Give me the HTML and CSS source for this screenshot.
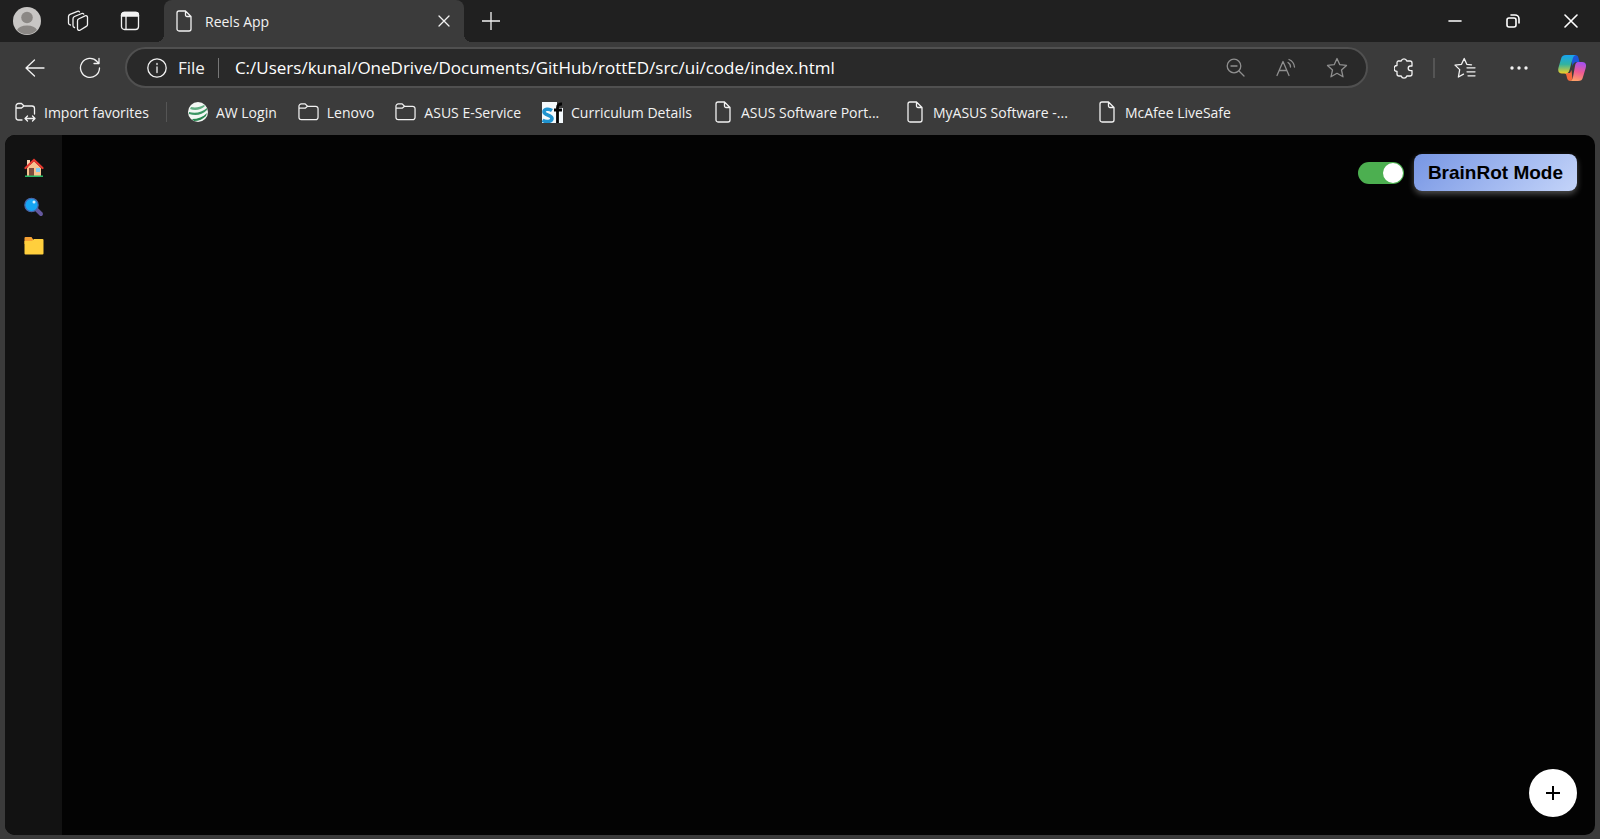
FILE: index.html
```html
<!DOCTYPE html>
<html lang="en">

<head>
    <meta charset="UTF-8">
    <title>Reels App</title>
    <link rel="stylesheet" href="styles.css">
</head>

<body>
    <svg class="symbols" aria-hidden="true">
        <symbol id="page" viewBox="0 0 16 22">
            <path d="M3 1h6.500L15 6.500V19a2 2 0 0 1-2 2H3a2 2 0 0 1-2-2V3a2 2 0 0 1 2-2zM9.500 1v4a1.500 1.500 0 0 0 1.500 1.500h4" />
        </symbol>
        <symbol id="folder" viewBox="0 0 22 20">
            <path d="M1 4a2.500 2.500 0 0 1 2.500-2.500h4L10 4h8.500A2.500 2.500 0 0 1 21 6.500v9a2.500 2.500 0 0 1-2.500 2.500h-15A2.500 2.500 0 0 1 1 15.500zM1 6h6.500L10 4" />
        </symbol>
    </svg>

    <div class="tabs">
        <button class="avatar" aria-label="Profile">
            <svg width="28" height="28" viewBox="0 0 28 28">
                <circle cx="14" cy="14" r="14" fill="#c8c6c4" />
                <circle cx="14" cy="10.500" r="5.800" fill="#8b8885" />
                <path d="M4 23a10.500 6.500 0 0 1 20 0 14 14 0 0 1-20 0z" fill="#8b8885" />
            </svg>
        </button>
        <button class="workspaces" aria-label="Workspaces">
            <svg class="line" width="22" height="22" viewBox="0 0 22 22">
                <path d="M11.500 9l6.500-3.200a1.700 1.700 0 0 1 2.500 1.500v7.200a2 2 0 0 1-1.200 1.900l-6.300 3.800a1.700 1.700 0 0 1-2.500-1.500v-7.700A2.200 2.200 0 0 1 11.500 9z" />
                <path d="M7.500 17.500A2 2 0 0 1 6 15.500V8.700a2.500 2.500 0 0 1 1.500-2.200l7.300-3a1.800 1.800 0 0 1 2 .6" />
                <path d="M3.500 15A2 2 0 0 1 1.500 13V6.500A2.500 2.500 0 0 1 3 4.300l7.500-3a1.800 1.800 0 0 1 2 .6" />
            </svg>
        </button>
        <button class="tab-actions" aria-label="Tab actions">
            <svg class="line" width="20" height="20" viewBox="0 0 20 20">
                <rect x="1.500" y="1.500" width="17" height="17" rx="3" />
                <path d="M1.500 5V4a2.500 2.500 0 0 1 2.500-2.500h12A2.500 2.500 0 0 1 18.500 4v1z" fill="#f2f2f2" />
                <path d="M6 5v13" />
            </svg>
        </button>
        <div class="tab">
            <svg class="line" width="16" height="22"><use href="#page" /></svg>
            <span class="tab-title">Reels App</span>
            <button aria-label="Close tab">
                <svg class="line" width="12" height="12" viewBox="0 0 12 12"><path d="M1 1l10 10M11 1L1 11" /></svg>
            </button>
        </div>
        <button class="new-tab" aria-label="New tab">
            <svg class="line" width="18" height="18" viewBox="0 0 18 18"><path d="M9 0v18M0 9h18" /></svg>
        </button>
        <div class="window-buttons">
            <button aria-label="Minimize">
                <svg class="line bold" width="14" height="14" viewBox="0 0 14 14"><path d="M1 7h12" /></svg>
            </button>
            <button aria-label="Restore">
                <svg class="line bold" width="14" height="14" viewBox="0 0 14 14">
                    <rect x="1" y="4" width="9" height="9" rx="2" />
                    <path d="M5 1h4a4 4 0 0 1 4 4v4" />
                </svg>
            </button>
            <button aria-label="Close window">
                <svg class="line bold" width="14" height="14" viewBox="0 0 14 14"><path d="M1 1l12 12M13 1L1 13" /></svg>
            </button>
        </div>
    </div>

    <div class="toolbar">
        <button class="back" aria-label="Back">
            <svg class="line" width="20" height="18" viewBox="0 0 20 18"><path d="M19 9H1.500M9.500 1l-8.500 8 8.500 8" /></svg>
        </button>
        <button class="reload" aria-label="Refresh">
            <svg class="line" width="22" height="22" viewBox="0 0 22 22">
                <path d="M20.500 11A9.500 9.500 0 1 1 18 4.500l2 2M20 1.500v5h-5" />
            </svg>
        </button>
        <div class="address">
            <svg class="line" width="20" height="20" viewBox="0 0 20 20">
                <circle cx="10" cy="10" r="9.200" />
                <path d="M10 9v5.500M10 5.500v1" />
            </svg>
            <label for="url">File</label>
            <input type="text" id="url" value="C:/Users/kunal/OneDrive/Documents/GitHub/rottED/src/ui/code/index.html">
            <div class="address-buttons">
                <button aria-label="Zoom out">
                    <svg class="line" width="20" height="20" viewBox="0 0 20 20">
                        <circle cx="8" cy="8" r="6.800" />
                        <path d="M13 13l5 5M5 8h6" />
                    </svg>
                </button>
                <button aria-label="Read aloud">
                    <svg class="line" width="20" height="20" viewBox="0 0 20 20">
                        <path d="M1 17.500L7 3.500l6 14M3.200 12.500h7.600M12 4.500a5 5 0 0 1 2.500 4.500M13 1.500a9 9 0 0 1 5.500 7.500" />
                    </svg>
                </button>
                <button aria-label="Add to favorites">
                    <svg class="line" width="22" height="22" viewBox="0 0 22 22">
                        <path d="M11 1.500l2.800 6.200 6.700.7-5 4.600 1.500 6.800-6-3.500-6 3.500 1.500-6.800-5-4.600 6.700-.7z" />
                    </svg>
                </button>
            </div>
        </div>
        <div class="tools">
            <button aria-label="Extensions">
                <svg class="line" width="20" height="22" viewBox="0 0 20 22">
                    <path d="M4 4h3.200a2.900 2.900 0 0 1 5.600 0H16a2 2 0 0 1 2 2v3h-1.500a2.300 2.300 0 0 0 0 4.600H18V17a2 2 0 0 1-2 2h-3.200a2.900 2.900 0 0 1-5.600 0H5a2 2 0 0 1-2-2v-2.700a2.900 2.900 0 0 1 0-5.800V6a2 2 0 0 1 1-2z" />
                </svg>
            </button>
            <span class="divider"></span>
            <button class="favorites" aria-label="Favorites">
                <svg class="line" width="22" height="22" viewBox="0 0 22 22">
                    <path d="M17.500 7.800l-4.700-.5L10.200 1.500 7.500 7.300l-6.500.8 4.700 4.500L4.400 20l5.100-2.900M13 10.800h8M13 14.800h8M14 18.800h7" />
                </svg>
            </button>
            <button class="more" aria-label="Settings and more">
                <svg width="18" height="4" viewBox="0 0 18 4" fill="#f2f2f2">
                    <circle cx="2" cy="2" r="1.700" />
                    <circle cx="9" cy="2" r="1.700" />
                    <circle cx="16" cy="2" r="1.700" />
                </svg>
            </button>
            <button aria-label="Copilot">
                <svg width="28" height="26" viewBox="0 0 28 26">
                    <defs>
                        <linearGradient id="left" x1="0" y1="0" x2="0" y2="1">
                            <stop offset="0" stop-color="#17a3f0" />
                            <stop offset=".5" stop-color="#31b3a0" />
                            <stop offset="1" stop-color="#f0cf25" />
                        </linearGradient>
                        <linearGradient id="right" x1=".5" y1="0" x2=".3" y2="1">
                            <stop offset="0" stop-color="#a650ed" />
                            <stop offset=".5" stop-color="#ef5b91" />
                            <stop offset="1" stop-color="#ffa266" />
                        </linearGradient>
                    </defs>
                    <path d="M13 0h4a3.500 3.500 0 0 1 3.500 3l1 4h-3c-2 0-3 1-4 4z" fill="#1c55d8" />
                    <path d="M6 18h6l1.500-3 1 9-2 2c-2 0-3-1-3.500-3C8.500 20 8 18.500 6 18z" fill="#f4693c" />
                    <path d="M8 0h10c-2 0-3 2-4 6l-2.500 9c-.7 2.500-2 3.500-4 3.500H4c-3 0-4.500-2-3.500-6L3 4c.8-3 2-4 5-4z" fill="url(#left)" />
                    <path d="M20 7h4c3.500 0 4.700 2 3.700 6L25 22c-.8 3-2 4-5 4h-8.500c2 0 3-1.500 3.500-4l2-11c.5-3 1.500-4 3-4z" fill="url(#right)" />
                </svg>
            </button>
        </div>
    </div>

    <nav class="bookmarks">
        <a href="#" class="import">
            <svg class="line" width="21" height="20" viewBox="0 0 21 20">
                <path d="M7 18H3.500A2.500 2.500 0 0 1 1 15.500V4a2.500 2.500 0 0 1 2.500-2.500h3L9 4h8a2.500 2.500 0 0 1 2.500 2.500V12M1 6h5.500L9 4M10.500 16.500h9M12.500 14L10 16.500l2.500 2.500M17.500 14l2.500 2.500-2.500 2.500" />
            </svg>
            Import favorites
        </a>
        <a href="#">
            <svg width="20" height="20" viewBox="0 0 20 20">
                <circle cx="10" cy="10" r="10" fill="#f3f7f4" />
                <path d="M3 5c5 1 9 0 13-2l1 1c-4 4-10 5-15 3z" fill="#62ae83" />
                <path d="M1 10c7 2 13 0 18-4v2C14 13 8 14 1 12z" fill="#3c9664" />
                <path d="M4 17c6 0 11-2 15-6l-1 3c-3 3-7 5-12 5z" fill="#27864f" />
            </svg>
            AW Login
        </a>
        <a href="#"><svg class="line" width="21" height="20"><use href="#folder" /></svg>Lenovo</a>
        <a href="#"><svg class="line" width="21" height="20"><use href="#folder" /></svg>ASUS E-Service</a>
        <a href="#">
            <svg width="21" height="21" viewBox="0 0 21 21">
                <path d="M0 0h15v6h6v15H0z" fill="#f4f9fc" />
                <path d="M10 8.500C7 6.500 2 6.800 2 10s8 3.200 8 6.500-6 4-9.500 1.700" fill="none" stroke="#1f93cf" stroke-width="3.600" />
                <path d="M15.500 21V5.500Q15.500 1.800 20 2M12 8h8" fill="none" stroke="#050505" stroke-width="2.800" />
            </svg>
            Curriculum Details
        </a>
        <a href="#" class="long"><svg class="line" width="20" height="22"><use href="#page" /></svg>ASUS Software Port...</a>
        <a href="#" class="long"><svg class="line" width="20" height="22"><use href="#page" /></svg>MyASUS Software -...</a>
        <a href="#"><svg class="line" width="20" height="22"><use href="#page" /></svg>McAfee LiveSafe</a>
    </nav>

    <div class="app">
        <nav class="sidebar">
            <a href="#" aria-label="Home">
                <svg width="20" height="20" viewBox="0 0 20 20">
                    <path d="M3 2h3v7H3z" fill="#f3d3b0" />
                    <path d="M3 10l7-7 7 7v8H3z" fill="#f6c390" />
                    <path d="M5 10h5v8H5z" fill="#7d4b3c" />
                    <path d="M12 10h4v4h-4z" fill="#83cdf0" />
                    <path d="M1.500 10L10 2l8.500 8" fill="none" stroke="#e8392f" stroke-width="2.200" stroke-linecap="round" />
                    <path d="M1 17.500h18V19H1z" fill="#27b766" />
                </svg>
            </a>
            <a href="#" aria-label="Search">
                <svg width="20" height="20" viewBox="0 0 20 20">
                    <path d="M12 12l5 5" stroke="#65589e" stroke-width="4" stroke-linecap="round" />
                    <circle cx="7.500" cy="8" r="6.700" fill="#16a5f3" stroke="#4865a8" stroke-width="1.200" />
                    <circle cx="10" cy="5" r="1.500" fill="#d5f2ff" />
                </svg>
            </a>
            <a href="#" aria-label="Folders">
                <svg width="20" height="20" viewBox="0 0 20 20">
                    <path d="M1.500 1h6l2 3v4h-9V2a1 1 0 0 1 1-1z" fill="#f5a033" />
                    <path d="M.5 5H8l2-2h8.500a1 1 0 0 1 1 1v13.500a1 1 0 0 1-1 1h-17a1 1 0 0 1-1-1z" fill="#ffcf3d" />
                </svg>
            </a>
        </nav>
        <main class="feed">
            <div class="mode">
                <input type="checkbox" class="switch" id="mode" aria-label="BrainRot Mode" checked>
                <button class="mode-button">BrainRot Mode</button>
            </div>
            <button class="add" aria-label="Add reel">
                <svg width="14" height="14" viewBox="0 0 14 14"><path d="M7 0v14M0 7h14" stroke="#000" stroke-width="2" /></svg>
            </button>
        </main>
    </div>
</body>

</html>
```
FILE: styles.css
```css
* {
    box-sizing: border-box;
}

body {
    margin: 0;
    height: 100vh;
    display: flex;
    flex-direction: column;
    background-color: #3b3b3b;
    color: #f2f2f2;
    font-family: "Open Sans", "Noto Sans", sans-serif;
    font-size: 14px;
}

button {
    display: flex;
    align-items: center;
    justify-content: center;
    padding: 0;
    border: none;
    background: none;
    color: inherit;
    cursor: pointer;
}

svg {
    flex-shrink: 0;
}

.symbols {
    position: absolute;
    width: 0;
    height: 0;
}

.line {
    fill: none;
    stroke: #f2f2f2;
    stroke-width: 1.3;
    stroke-linecap: round;
    stroke-linejoin: round;
}

.bold {
    stroke: #fff;
    stroke-width: 1.6;
}

/* tab strip */
.tabs {
    display: flex;
    align-items: center;
    height: 42px;
    background-color: #202020;
}

.avatar {
    width: 54px;
}

.workspaces {
    width: 48px;
}

.tab-actions {
    width: 56px;
}

.tab {
    position: relative;
    display: flex;
    align-items: center;
    gap: 13px;
    width: 300px;
    height: 42px;
    margin-left: 6px;
    padding: 0 14px 0 12px;
    border-radius: 8px 8px 0 0;
    background-color: #3b3b3b;
}

.tab::before,
.tab::after {
    content: "";
    position: absolute;
    bottom: 0;
    width: 8px;
    height: 8px;
}

.tab::before {
    right: 100%;
    background: radial-gradient(circle at 0 0, #202020 8px, #3b3b3b 8px);
}

.tab::after {
    left: 100%;
    background: radial-gradient(circle at 100% 0, #202020 8px, #3b3b3b 8px);
}

.tab-title {
    flex: 1;
}

.new-tab {
    width: 54px;
}

.window-buttons {
    display: flex;
    margin-left: auto;
}

.window-buttons button {
    width: 58px;
    height: 42px;
}

/* toolbar */
.toolbar {
    display: flex;
    align-items: center;
    height: 51px;
    padding: 0 14px 0 8px;
}

.back {
    width: 54px;
}

.reload {
    width: 56px;
}

.address {
    flex: 1;
    display: flex;
    align-items: center;
    height: 41px;
    margin-left: 7px;
    padding: 0 18px 0 20px;
    border: 2px solid #505050;
    border-radius: 21px;
    background-color: #292929;
    font-size: 17px;
}

.address label {
    margin: 0 13px 0 11px;
}

.address input {
    flex: 1;
    min-width: 0;
    height: 20px;
    padding: 0 0 0 16px;
    border: none;
    border-left: 1px solid #777;
    outline: none;
    background: none;
    color: #fff;
    font: inherit;
}

.address-buttons {
    display: flex;
    gap: 30px;
}

.address-buttons .line {
    stroke: #8f8f8f;
}

.tools {
    display: flex;
    align-items: center;
    margin-left: 26px;
}

.divider {
    width: 2px;
    height: 20px;
    margin: 0 19px;
    background-color: #555;
}

.more {
    margin: 0 30px 0 34px;
}

/* bookmarks bar */
.bookmarks {
    display: flex;
    align-items: center;
    gap: 21px;
    height: 42px;
    padding: 0 15px 4px;
}

.bookmarks a {
    display: flex;
    align-items: center;
    gap: 8px;
    color: inherit;
    text-decoration: none;
    white-space: nowrap;
}

.bookmarks .import {
    height: 20px;
    padding-right: 17px;
    border-right: 1px solid #555;
}

.bookmarks .long {
    width: 171px;
}

/* page */
.app {
    flex: 1;
    display: flex;
    margin: 0 5px 4px;
    border-radius: 10px;
    overflow: hidden;
    background-color: #030303;
}

.sidebar {
    display: flex;
    flex-direction: column;
    align-items: center;
    gap: 19px;
    width: 57px;
    padding-top: 23px;
    background-color: #121212;
}

.sidebar a {
    display: flex;
}

.feed {
    flex: 1;
    display: flex;
    flex-direction: column;
    align-items: flex-end;
    justify-content: space-between;
    padding: 19px 18px 18px;
}

.mode {
    display: flex;
    align-items: center;
    gap: 10px;
}

.switch {
    appearance: none;
    display: flex;
    justify-content: flex-end;
    width: 46px;
    height: 22px;
    margin: 0;
    padding: 1px;
    border-radius: 11px;
    background-color: #4caf50;
}

.switch::before {
    content: "";
    width: 20px;
    border-radius: 50%;
    background-color: #fff;
}

.mode-button {
    height: 37px;
    padding: 0 14px;
    border-radius: 8px;
    background: linear-gradient(135deg, #7796e4, #c4d4f9);
    box-shadow: 0 3px 6px rgba(255, 255, 255, 0.3);
    color: #000;
    font-family: "Liberation Sans", Arial, sans-serif;
    font-size: 19px;
    font-weight: bold;
}

.add {
    width: 48px;
    height: 48px;
    border-radius: 50%;
    background-color: #fff;
}
```
